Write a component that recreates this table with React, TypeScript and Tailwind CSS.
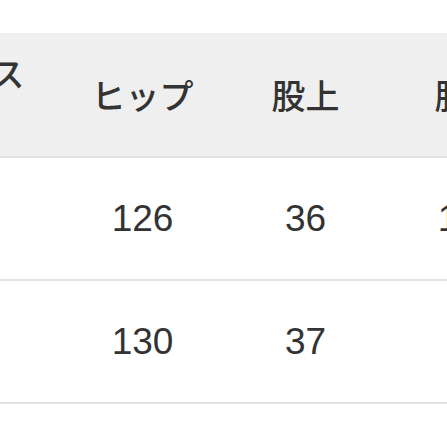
import React from 'react';

const jp = { fontFamily: '"Noto Sans CJK JP", "Noto Sans", sans-serif' };
const num = { fontFamily: '"Liberation Sans", Arial, sans-serif' };

const headers = ['ウエス\nト', 'ヒップ', '股上', '股下'];
const rows = [
  ['', '126', '36', '128'],
  ['', '130', '37', ''],
  ['', '', '', ''],
];

const App: React.FC = () => {
  return (
    <div className="w-[447px] h-[447px] overflow-hidden bg-white">
      <div className="pt-[33px] ml-[-102px] w-[652px]">
        {/* header */}
        <div className="flex h-[123px] bg-[#efefef] border-b-2 border-[#e2e2e2] box-content">
          {headers.map((h, i) => (
            <div
              key={i}
              className={`w-[163px] shrink-0 flex items-center justify-center text-center whitespace-pre-line text-[34px] leading-[44px] font-medium text-[#333] ${i === 0 ? 'pr-[12px]' : ''}`}
              style={jp}
            >
              {h}
            </div>
          ))}
        </div>
        {rows.map((r, ri) => (
          <div key={ri} className="flex h-[121px] border-b-2 border-[#e2e2e2] box-content">
            {r.map((v, i) => (
              <div
                key={i}
                className="w-[163px] shrink-0 flex items-center justify-center text-[37px] text-[#333]"
                style={num}
              >
                {v}
              </div>
            ))}
          </div>
        ))}
      </div>
    </div>
  );
};

export default App;
